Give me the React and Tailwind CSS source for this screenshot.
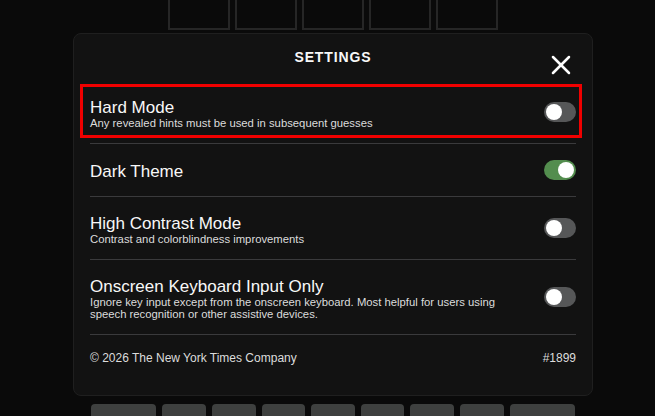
import { X } from 'lucide-react'

const ROWS = [
  {
    title: 'Hard Mode',
    hint: 'Any revealed hints must be used in subsequent guesses',
    on: false,
    highlight: true
  },
  { title: 'Dark Theme', on: true },
  {
    title: 'High Contrast Mode',
    hint: 'Contrast and colorblindness improvements',
    on: false
  },
  {
    title: 'Onscreen Keyboard Input Only',
    hint: 'Ignore key input except from the onscreen keyboard. Most helpful for users using speech recognition or other assistive devices.',
    on: false
  }
]

function Toggle({ on }) {
  return (
    <div
      className={
        on
          ? 'flex h-[20px] w-[32px] shrink-0 items-center justify-end rounded-full bg-[#538d4e] p-[2px]'
          : 'flex h-[20px] w-[32px] shrink-0 items-center justify-start rounded-full bg-[#565758] p-[2px]'
      }
    >
      <div className="h-[16px] w-[16px] rounded-full bg-white" />
    </div>
  )
}

function SettingRow({ title, hint, on, highlight }) {
  return (
    <div className="relative flex items-center justify-between gap-4 border-b border-[#3a3a3c] py-4">
      {/* annotation box */}
      {highlight && (
        <div className="pointer-events-none absolute top-[3px] bottom-[5px] -left-[10px] -right-[6px] border-[3px] border-[#f00000]" />
      )}
      <div className="flex translate-y-[2px] flex-col">
        <div className="text-[17px] leading-[18px] text-[#f8f8f8]">{title}</div>
        {hint && (
          <div className="max-w-[420px] text-[11.3px] leading-[12px] text-[#dcdcdc]">{hint}</div>
        )}
      </div>
      <Toggle on={on} />
    </div>
  )
}

export default function App() {
  return (
    <div className="h-[416px] w-[655px] overflow-hidden bg-[#0a0a0a] font-['Liberation_Sans',Arial,sans-serif]">
      <div className="ml-[73px] flex w-[520px] flex-col">
        {/* board peeking above the modal */}
        <div className="-mt-[32px] flex justify-center gap-[5px]">
          {[0, 1, 2, 3, 4].map(i => (
            <div key={i} className="h-[62px] w-[62px] border-2 border-[#262626]" />
          ))}
        </div>

        {/* Settings modal */}
        <div className="relative mt-[3px] h-[363px] rounded-lg border border-[#1f1f1f] bg-[#121212] px-[16px]">
          <div className="flex h-[47px] items-end justify-center pb-[13px]">
            <h2 className="text-[14px] font-bold tracking-[0.9px] text-[#f8f8f8]">SETTINGS</h2>
          </div>
          <button className="absolute top-[15px] right-[15px] text-white">
            <X size={32} strokeWidth={1.9} />
          </button>

          {ROWS.map(r => (
            <SettingRow key={r.title} {...r} />
          ))}

          <div className="flex justify-between pt-[14px] text-[12px] text-[#dcdcdc]">
            <span>© 2026 The New York Times Company</span>
            <span>#1899</span>
          </div>
        </div>

        {/* keyboard row peeking below */}
        <div className="mt-[8px] flex gap-[6px] px-[18px]">
          <div className="h-[40px] flex-[1.5] rounded-[4px] bg-[#3e403f]" />
          {[0, 1, 2, 3, 4, 5, 6].map(i => (
            <div key={i} className="h-[40px] flex-1 rounded-[4px] bg-[#3e403f]" />
          ))}
          <div className="h-[40px] flex-[1.5] rounded-[4px] bg-[#3e403f]" />
        </div>
      </div>
    </div>
  )
}
